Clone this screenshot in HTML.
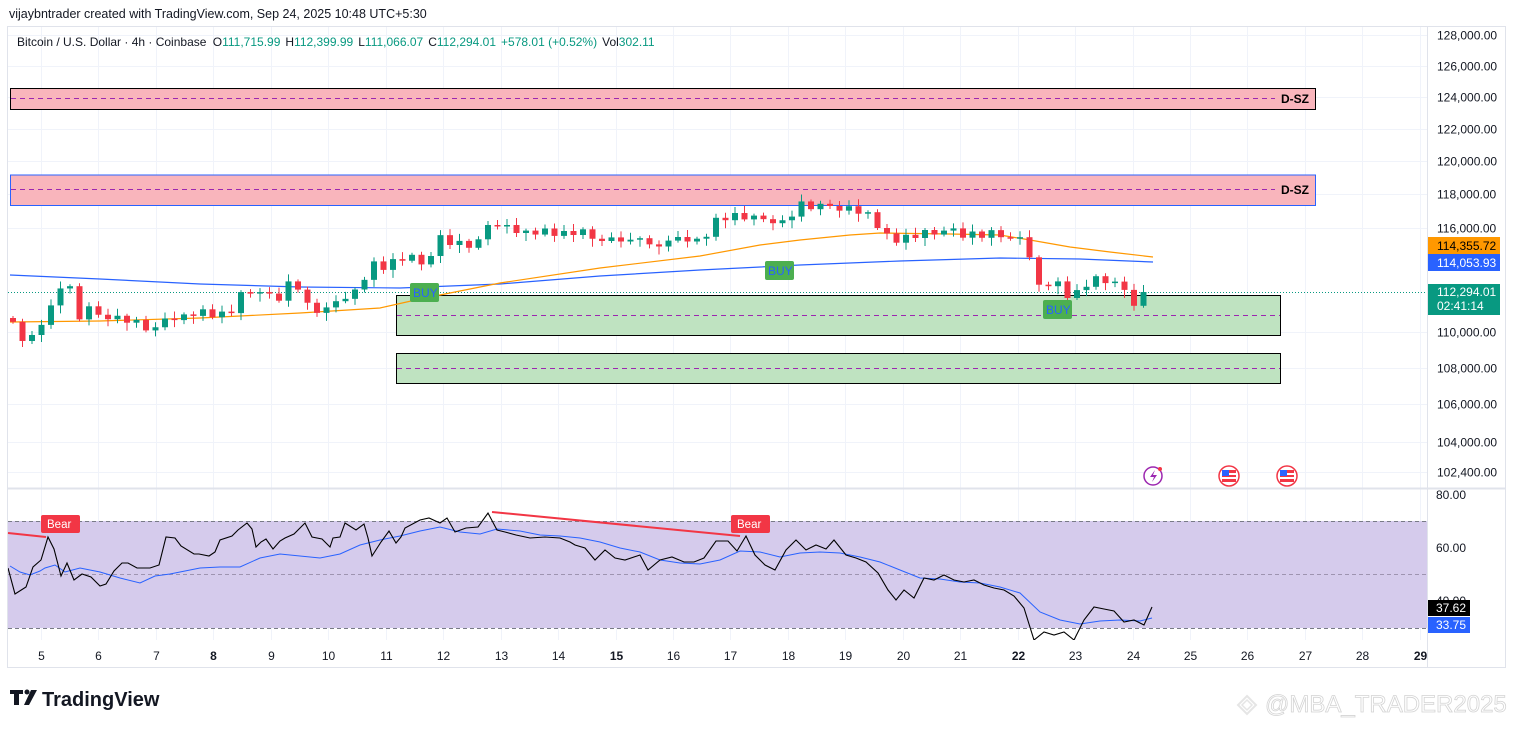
<!DOCTYPE html>
<html><head><meta charset="utf-8">
<style>
html,body{margin:0;padding:0;background:#fff;width:1515px;height:729px;overflow:hidden;font-family:"Liberation Sans",sans-serif}
svg text{font-family:"Liberation Sans",sans-serif}
</style></head>
<body>
<svg id="s" width="1515" height="729" xmlns="http://www.w3.org/2000/svg">
<rect x="0" y="0" width="1515" height="729" fill="#fff"/>
<text x="9" y="18" font-size="12.5" fill="#131722">vijaybntrader created with TradingView.com, Sep 24, 2025 10:48 UTC+5:30</text>
<rect x="7.5" y="26.5" width="1498" height="641" fill="none" stroke="#e0e3eb"/>
<g id="grid" stroke="#f0f3fa" stroke-width="1"></g>
<line x1="8" y1="488.5" x2="1505" y2="488.5" stroke="#e0e3eb" stroke-width="2"/>
<line x1="1427.5" y1="27" x2="1427.5" y2="667" stroke="#e0e3eb"/>
<text x="17" y="46" font-size="12" fill="#131722">Bitcoin / U.S. Dollar · 4h · Coinbase <tspan dx="3">O</tspan><tspan fill="#089981">111,715.99</tspan><tspan dx="5">H</tspan><tspan fill="#089981">112,399.99</tspan><tspan dx="5">L</tspan><tspan fill="#089981">111,066.07</tspan><tspan dx="5">C</tspan><tspan fill="#089981">112,294.01</tspan><tspan dx="5" fill="#089981">+578.01 (+0.52%)</tspan><tspan dx="5">Vol</tspan><tspan fill="#089981">302.11</tspan></text>
<rect x="10.5" y="88.5" width="1305" height="21" fill="#f9b5bc" stroke="#000"/>
<line x1="11" y1="98.5" x2="1275" y2="98.5" stroke="#9c27b0" stroke-dasharray="5,4"/>
<text x="1281" y="103" font-size="12" font-weight="bold" fill="#000">D-SZ</text>
<rect x="10.5" y="175" width="1305" height="30.5" fill="#f9b5bc" stroke="#2962ff"/>
<line x1="11" y1="189.5" x2="1275" y2="189.5" stroke="#9c27b0" stroke-dasharray="5,4"/>
<text x="1281" y="194" font-size="12" font-weight="bold" fill="#000">D-SZ</text>
<rect x="396.5" y="295.5" width="884" height="40" fill="#bfe3c1" stroke="#000"/>
<line x1="397" y1="315.5" x2="1280" y2="315.5" stroke="#9c27b0" stroke-dasharray="5,4"/>
<rect x="396.5" y="353.5" width="884" height="30" fill="#bfe3c1" stroke="#000"/>
<line x1="397" y1="368.5" x2="1280" y2="368.5" stroke="#9c27b0" stroke-dasharray="5,4"/>
<line x1="8" y1="292.5" x2="1427" y2="292.5" stroke="#089981" stroke-dasharray="1,2"/>
<polyline fill="none" stroke="#2962ff" stroke-width="1.2" points="10,275 100,279 200,284 300,287 400,288 500,284 600,276 700,270 800,265 900,261 1000,258 1080,259 1153,262"/>
<polyline fill="none" stroke="#ff9800" stroke-width="1.2" points="10,322 100,321 200,318 300,313 380,308 420,299 500,283 600,268 700,256 760,245 800,240 850,235 880,233 950,234 1000,235 1030,240 1070,247 1110,252 1153,257"/>
<g id="candles"></g>
<rect x="410" y="283" width="29" height="19" rx="2" fill="#4caf50"/><text x="413" y="297" font-size="12" fill="#2962ff">BUY</text>
<rect x="765" y="261" width="29" height="19" rx="2" fill="#4caf50"/><text x="768" y="275" font-size="12" fill="#2962ff">BUY</text>
<rect x="1043" y="300" width="29" height="19" rx="2" fill="#4caf50"/><text x="1046" y="314" font-size="12" fill="#2962ff">BUY</text>
<g font-size="12" fill="#131722" id="pax"></g>
<rect x="1428" y="237" width="72" height="17" fill="#ff9800"/><text x="1437" y="250" font-size="12" fill="#000">114,355.72</text>
<rect x="1428" y="254" width="72" height="17" fill="#2962ff"/><text x="1437" y="267" font-size="12" fill="#fff">114,053.93</text>
<rect x="1428" y="284" width="72" height="31" fill="#089981"/><text x="1437" y="296" font-size="12" fill="#fff">112,294.01</text><text x="1437" y="310" font-size="12" fill="#fff">02:41:14</text>
<circle cx="1153" cy="476" r="9" fill="#fff" stroke="#9c27b0" stroke-width="1.5"/><path d="M1155 470 l-5 7 h4 l-2 5 l5 -7 h-4z" fill="#9c27b0"/><circle cx="1160" cy="469" r="2" fill="#f23645"/>
<g><circle cx="1229" cy="476" r="10" fill="#fff" stroke="#f23645" stroke-width="1.5"/><rect x="1222" y="470" width="14" height="12" fill="#f23645"/><rect x="1222" y="473" width="14" height="2" fill="#fff"/><rect x="1222" y="477" width="14" height="2" fill="#fff"/><rect x="1222" y="470" width="7" height="6" fill="#2962ff"/></g>
<g><circle cx="1287" cy="476" r="10" fill="#fff" stroke="#f23645" stroke-width="1.5"/><rect x="1280" y="470" width="14" height="12" fill="#f23645"/><rect x="1280" y="473" width="14" height="2" fill="#fff"/><rect x="1280" y="477" width="14" height="2" fill="#fff"/><rect x="1280" y="470" width="7" height="6" fill="#2962ff"/></g>
<rect x="8" y="521" width="1419" height="107" fill="#d5cbec"/>
<line x1="8" y1="521.5" x2="1427" y2="521.5" stroke="#787b86" stroke-dasharray="4,3"/>
<line x1="8" y1="574.5" x2="1427" y2="574.5" stroke="#9e94b0" stroke-dasharray="4,3"/>
<line x1="8" y1="628.5" x2="1427" y2="628.5" stroke="#787b86" stroke-dasharray="4,3"/>
<svg x="8" y="490" width="1419" height="150" overflow="hidden">
<g transform="translate(-8,-490)">
<polyline fill="none" stroke="#2962ff" stroke-width="1" points="10,566 20,572 30,575 40,571 45,568 55,565 65,572 80,568 100,572 120,578 140,583 155,576 170,574 200,568 220,567 240,567 260,558 280,554 300,556 320,558 340,554 360,545 380,540 400,536 420,531 440,527 460,532 480,534 497,529 520,531 540,535 560,536 580,538 600,542 620,548 640,552 660,560 680,563 700,564 720,560 740,551 760,552 780,557 800,553 820,552 840,553 860,557 880,562 900,570 920,578 940,579 960,582 980,583 1000,587 1020,593 1040,612 1060,620 1080,624 1100,621 1120,620 1140,621 1152,618"/>
<polyline fill="none" stroke="#000" stroke-width="1.1" points="8,568 15,594 26,587 33,567 41,560 48,537 54,549 61,576 67,563 74,580 82,574 91,577 100,586 106,584 114,571 122,563 128,563 137,568 150,568 159,565 166,537 175,538 181,546 194,554 199,554 209,556 215,552 220,540 232,536 238,530 247,523 252,529 256,547 261,542 266,539 273,549 280,541 285,538 294,534 305,523 312,537 322,539 330,547 333,538 340,537 345,523 356,530 364,524 368,538 372,556 381,542 389,531 396,543 401,537 405,528 420,520 429,518 440,523 447,518 455,532 466,528 478,527 488,513 497,530 505,532 516,535 530,538 545,537 560,538 570,542 575,545 585,548 595,560 605,550 615,558 625,560 640,555 648,570 660,560 672,557 684,562 694,562 704,558 716,541 728,541 737,551 746,536 755,555 765,565 775,570 786,550 796,540 806,550 816,545 826,549 834,540 846,555 856,558 866,562 878,573 888,590 896,600 904,590 914,598 924,578 934,580 944,575 954,580 964,582 974,580 984,585 994,588 1004,590 1014,596 1024,608 1034,640 1044,632 1054,635 1064,632 1074,640 1084,620 1094,607 1104,609 1114,611 1124,622 1134,620 1144,625 1152,607"/>
</g></svg>
<line x1="8" y1="533" x2="46" y2="537" stroke="#f23645" stroke-width="2"/>
<line x1="492" y1="512" x2="740" y2="536" stroke="#f23645" stroke-width="2"/>
<rect x="41" y="515" width="39" height="18" rx="2" fill="#f23645"/><text x="47" y="528" font-size="11.5" fill="#fff">Bear</text>
<rect x="731" y="515" width="39" height="18" rx="2" fill="#f23645"/><text x="737" y="528" font-size="11.5" fill="#fff">Bear</text>
<text x="1436" y="499" font-size="12" fill="#131722">80.00</text>
<text x="1436" y="552" font-size="12" fill="#131722">60.00</text>
<text x="1436" y="605" font-size="12" fill="#131722">40.00</text>
<rect x="1428" y="600" width="42" height="16" fill="#000"/><text x="1436" y="612" font-size="12" fill="#fff">37.62</text>
<rect x="1428" y="617" width="42" height="16" fill="#2962ff"/><text x="1436" y="629" font-size="12" fill="#fff">33.75</text>
<g id="tax" font-size="12" fill="#131722" text-anchor="middle"></g>
<g fill="#131722"><path d="M10 690 h13 v4 h-4 v11 h-5 v-11 h-4z"/><circle cx="27" cy="692" r="2.5"/><path d="M31 690 h6 l-8 15 h-5z"/></g>
<text x="42" y="706" font-size="20" font-weight="bold" fill="#131722">TradingView</text>
<g opacity="0.5"><path d="M1247 696 l9 9 l-9 9 l-9 -9z" fill="none" stroke="#ccc" stroke-width="2"/><path d="M1247 700 l5 5 l-5 5 l-5 -5z" fill="none" stroke="#ccc" stroke-width="1.5"/></g>
<text x="1265" y="712" font-size="24" fill="#fff" stroke="#d4d4d4" stroke-width="0.8">@MBA_TRADER2025</text>
</svg>
<script>
(function(){
var NS="http://www.w3.org/2000/svg";
function el(p,t,a,txt){var e=document.createElementNS(NS,t);for(var k in a)e.setAttribute(k,a[k]);if(txt)e.textContent=txt;p.appendChild(e);return e;}
function py(p){return 35+1958.6*(Math.log(128000)-Math.log(p));}
var grid=document.getElementById('grid'),pax=document.getElementById('pax'),tax=document.getElementById('tax');
var levels=[128000,126000,124000,122000,120000,118000,116000,110000,108000,106000,104000,102400];
levels.forEach(function(l){var y=Math.round(py(l))+.5;el(grid,'line',{x1:8,x2:1427,y1:y,y2:y});el(pax,'text',{x:1437,y:y+4},l.toLocaleString('en-US')+'.00');});
[547.5,601.5].forEach(function(y){el(grid,'line',{x1:8,x2:1427,y1:y,y2:y});});
var days=[5,6,7,8,9,10,11,12,13,14,15,16,17,18,19,20,21,22,23,24,25,26,27,28,29];
days.forEach(function(d,i){var x=Math.round(41+i*57.45)+.5;el(grid,'line',{x1:x,x2:x,y1:27,y2:640});var t=el(tax,'text',{x:x,y:660},String(d));if([8,15,22,29].indexOf(d)>=0)t.setAttribute('font-weight','bold');});
var pts=[[12,320],[22,338],[32,338],[42,320],[52,306],[62,283],[72,292],[80,318],[90,305],[100,320],[110,314],[120,319],[130,320],[140,326],[150,330],[160,325],[170,318],[180,316],[190,312],[200,312],[210,313],[220,314],[230,312],[240,297],[250,288],[260,295],[270,294],[280,297],[290,281],[300,288],[310,313],[320,310],[330,306],[340,303],[350,290],[360,289],[370,262],[380,268],[390,262],[400,259],[410,258],[420,262],[430,258],[440,238],[450,241],[460,243],[470,245],[480,243],[490,218],[500,228],[510,230],[520,230],[530,231],[540,232],[550,231],[560,233],[570,233],[580,233],[590,234],[600,241],[610,241],[620,237],[630,242],[640,236],[650,249],[660,244],[670,240],[680,240],[690,238],[700,239],[710,231],[720,214],[730,218],[740,212],[750,224],[760,213],[770,222],[780,226],[790,215],[800,203],[810,206],[820,208],[830,204],[840,211],[850,209],[860,211],[870,216],[880,228],[890,240],[900,238],[910,236],[920,236],[930,232],[940,231],[950,230],[960,234],[970,233],[980,235],[990,234],[1000,235],[1010,237],[1020,241],[1030,255],[1040,288],[1050,282],[1060,285],[1070,297],[1080,290],[1090,282],[1100,279],[1110,281],[1120,283],[1130,305],[1140,297],[1150,302],[1154,292]];
var cg=document.getElementById('candles');var prev=318;var n=120;
var noise=[0,3,-3,4,-2,2,-4,3,0,-3,4,-2,3,-4,2,0,-3,3];
function interp(x){for(var j=0;j<pts.length-1;j++){if(x<=pts[j+1][0]){var a=pts[j],b=pts[j+1];return a[1]+(b[1]-a[1])*(x-a[0])/(b[0]-a[0]);}}return pts[pts.length-1][1];}
for(var i=0;i<n;i++){var x=13+i*9.5;var c=interp(x)+noise[i%noise.length];if(i==n-1)c=292;var o=prev;if(Math.abs(c-o)<1.5)c=o+((i%2)?1.5:-1.5);
var up=c<o;var col=up?'#089981':'#f23645';var tp=Math.min(o,c),bt=Math.max(o,c);
var w1=2+((i*7)%6),w2=2+((i*11)%7);
el(cg,'line',{x1:x,x2:x,y1:tp-w1,y2:bt+w2,stroke:col,'stroke-width':1});
el(cg,'rect',{x:x-3,y:tp,width:6,height:Math.max(1,bt-tp),fill:col});prev=c;}
})();
</script>
</body></html>
